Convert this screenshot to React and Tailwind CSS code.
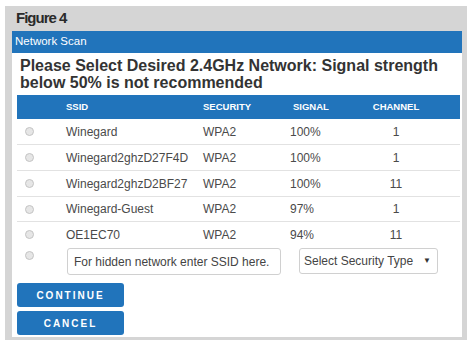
const networks = [
  { ssid: "Winegard", security: "WPA2", signal: "100%", channel: "1" },
  { ssid: "Winegard2ghzD27F4D", security: "WPA2", signal: "100%", channel: "1" },
  { ssid: "Winegard2ghzD2BF27", security: "WPA2", signal: "100%", channel: "11" },
  { ssid: "Winegard-Guest", security: "WPA2", signal: "97%", channel: "1" },
  { ssid: "OE1EC70", security: "WPA2", signal: "94%", channel: "11" },
];

const Radio = () => (
  <span className="block w-[9px] h-[9px] rounded-full border border-[#c4c4c4] bg-[#e6e6e6]" />
);

const rowClass = (i) => {
  if (i < 3) return "h-[26px] grid grid-cols-[49px_137px_87px_66px_80px_1fr] items-center text-[12px] text-[#4a4a4a] border-b border-[#e2e2e2]";
  if (i === 3) return "h-[25px] grid grid-cols-[49px_137px_87px_66px_80px_1fr] items-center text-[12px] text-[#4a4a4a] border-b border-[#e2e2e2]";
  return "h-[25px] grid grid-cols-[49px_137px_87px_66px_80px_1fr] items-center text-[12px] text-[#4a4a4a]";
};

const App = () => {
  return (
    <div className="w-[472px] h-[341px] bg-white pt-[6px] px-[5px] font-['Liberation_Sans',Arial,sans-serif]">
      <div className="bg-[#d5d5d5] pl-[7px] pr-[5px] pb-[3px]">
        <div className="h-[25px] flex items-center pl-[4px] text-[15px] font-bold text-[#2a2a2a] tracking-[-1px]">
          Figure 4
        </div>
        <div className="h-[22px] bg-[#2174bb] flex items-center pl-[3px] text-[11.5px] text-white">
          Network Scan
        </div>
        <div className="bg-white pl-[5px] pr-[2px] pt-[4px] pb-[2px]">
          <h1 className="pl-[3px] text-[16px] leading-[17px] font-bold text-[#333]">
            Please Select Desired 2.4GHz Network: Signal strength below 50% is not recommended
          </h1>

          <div className="mt-[4px]">
            <div className="h-[24px] bg-[#2174bb] grid grid-cols-[49px_137px_87px_66px_80px_1fr] items-center text-[9.5px] font-bold text-white">
              <span />
              <span>SSID</span>
              <span>SECURITY</span>
              <span className="pl-[3px]">SIGNAL</span>
              <span className="text-center">CHANNEL</span>
              <span />
            </div>
            {networks.map((n, i) => (
              <div key={n.ssid} className={rowClass(i)}>
                <span className="pl-[8px]"><Radio /></span>
                <span>{n.ssid}</span>
                <span>{n.security}</span>
                <span>{n.signal}</span>
                <span className="text-center">{n.channel}</span>
                <span />
              </div>
            ))}
            <div className="flex items-start pt-[1px]">
              <span className="pl-[8px] pt-[3px] w-[50px]"><Radio /></span>
              <div className="w-[214px] h-[27px] border border-[#d0d0d0] rounded-[3px] flex items-center pl-[6px] text-[12px] text-[#444]">
                For hidden network enter SSID here.
              </div>
              <div className="ml-[18px] w-[139px] h-[26px] border border-[#d0d0d0] rounded-[3px] flex items-center justify-between pl-[4px] pr-[6px] text-[12px] text-[#444]">
                <span>Select Security Type</span>
                <span className="text-[8px] text-[#333]">▼</span>
              </div>
            </div>
          </div>

          <div className="flex flex-col gap-[4px] mt-[8px]">
            <button className="w-[107px] h-[24px] bg-[#2174bb] rounded-[3px] text-white text-[10px] font-bold tracking-[2px]">
              CONTINUE
            </button>
            <button className="w-[107px] h-[24px] bg-[#2174bb] rounded-[3px] text-white text-[10px] font-bold tracking-[2px]">
              CANCEL
            </button>
          </div>
        </div>
      </div>
    </div>
  );
};

export default App;
